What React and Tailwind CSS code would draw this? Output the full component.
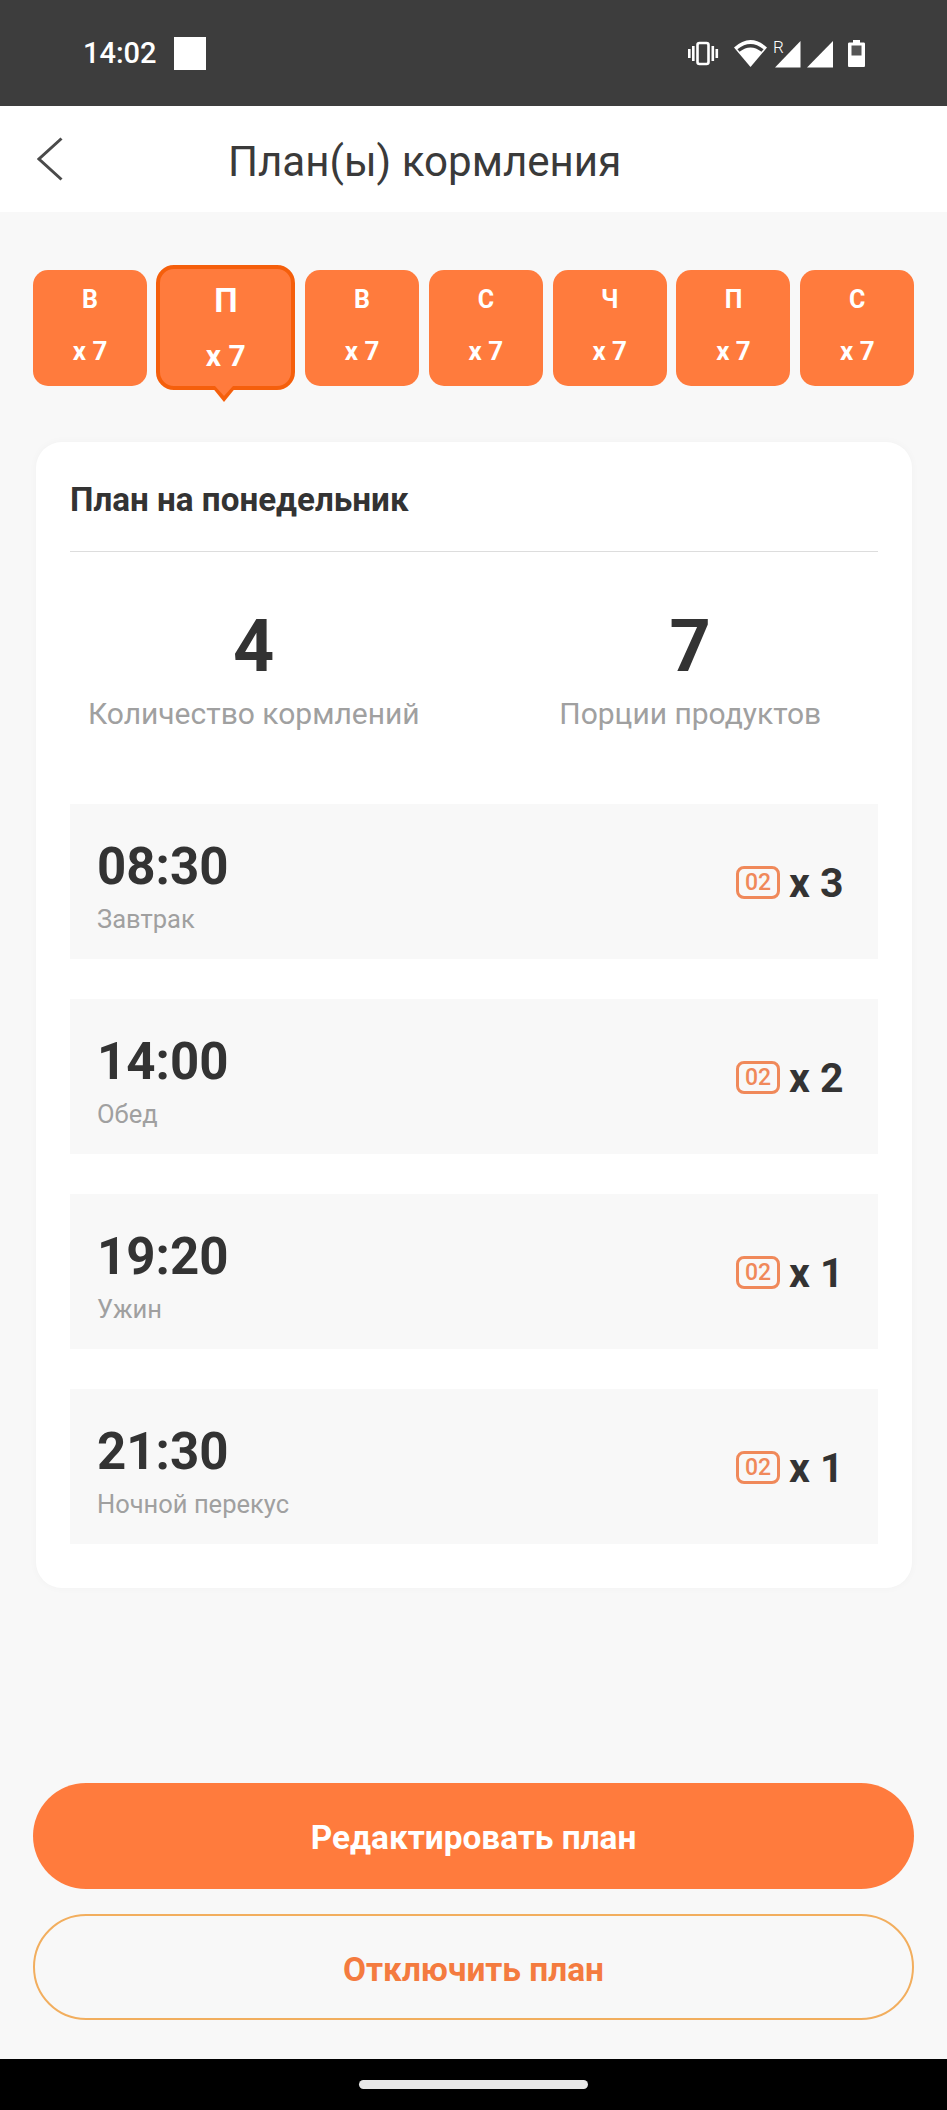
import React from 'react';

const days = [
    { label: 'В', count: 'x 7' },
    { label: 'П', count: 'x 7', active: true },
    { label: 'В', count: 'x 7' },
    { label: 'С', count: 'x 7' },
    { label: 'Ч', count: 'x 7' },
    { label: 'П', count: 'x 7' },
    { label: 'С', count: 'x 7' },
];

const meals = [
    { time: '08:30', name: 'Завтрак', portions: 'x 3' },
    { time: '14:00', name: 'Обед', portions: 'x 2' },
    { time: '19:20', name: 'Ужин', portions: 'x 1' },
    { time: '21:30', name: 'Ночной перекус', portions: 'x 1' },
];

const StatusIcons = () => (
    <svg width="178" height="30" viewBox="0 0 178 30" className="block" fill="white">
        {/* vibrate */}
        <rect x="10.500" y="5" width="11" height="21" rx="2" fill="none" stroke="white" strokeWidth="2.600" />
        <rect x="1" y="11" width="2.600" height="9" />
        <rect x="5" y="8" width="2.600" height="15" />
        <rect x="24.500" y="8" width="2.600" height="15" />
        <rect x="28.500" y="11" width="2.600" height="9" />
        {/* wifi */}
        <path d="M47 9.500Q63.500 -5.500 80 9.500L63.500 29Z" />
        <path d="M51.500 12.500Q63.500 3 75.500 12.500" fill="none" stroke="#3d3d3d" strokeWidth="3.400" />
        {/* roaming */}
        <text x="86" y="15" fontSize="17" fontWeight="300" fill="white" fontFamily="Roboto, sans-serif">R</text>
        {/* signal */}
        <path d="M113.500 3V29.500H88Z" />
        <path d="M146 3V29.500H120Z" />
        {/* battery */}
        <path d="M166 2H173V4.500H176.500C177.500 4.500 178 5 178 6V27.500C178 28.500 177.500 29 176.500 29H162.500C161.500 29 161 28.500 161 27.500V6C161 5 161.500 4.500 162.500 4.500H166Z" />
        <rect x="164.500" y="7.500" width="10" height="10" fill="#555555" />
    </svg>
);

const DayTab = ({ label, count, active }) => {
    if (active) {
        return (
            <div className="relative flex flex-col items-center w-[139px] h-[125px] -ml-[0.5px] rounded-[18px] border-[4px] border-[#f55f0c] bg-[#ff7b3d] text-white font-bold">
                <span className="mt-[14px] text-[33px] leading-[36px]">{label}</span>
                <span className="mt-[20px] text-[30px] leading-[34px]">{count}</span>
                <svg width="30" height="18" viewBox="0 0 30 18" className="absolute left-[49px] top-[117px]">
                    <path d="M2 0H28L15 16Z" fill="#f55f0c" />
                    <path d="M6 0H24L15 10Z" fill="#ff7b3d" />
                </svg>
            </div>
        );
    }
    return (
        <div className="flex flex-col items-center w-[114px] h-[116px] rounded-[15px] bg-[#ff7b3d] text-white font-bold">
            <span className="mt-[15px] text-[25px] leading-[30px]">{label}</span>
            <span className="mt-[21px] text-[26px] leading-[30px]">{count}</span>
        </div>
    );
};

const MealRow = ({ time, name, portions }) => (
    <div className="flex items-center justify-between h-[155px] pl-[27px] pr-[34px] bg-[#f8f8f8]">
        <div className="flex flex-col mt-[8px]">
            <span className="text-[51px] leading-[58px] font-bold text-[#333333]">{time}</span>
            <span className="mt-[8px] text-[25.500px] leading-[30px] text-[#a0a0a0]">{name}</span>
        </div>
        <div className="flex items-center gap-[9px] w-[108px] mt-[2px]">
            <span className="flex items-center justify-center w-[44px] h-[33px] -mt-[1px] rounded-[8px] border-[3px] border-[#f0895a] text-[#f0895a] text-[23px] font-medium leading-none">
                02
            </span>
            <span className="text-[41px] leading-[48px] font-bold text-[#333333] whitespace-nowrap">{portions}</span>
        </div>
    </div>
);

const App = () => {
    return (
        <div className="flex flex-col w-[947px] h-[2110px] bg-[#f8f8f8] font-['Roboto',sans-serif]">
            {/* Status bar */}
            <div className="flex items-center justify-between h-[106px] pl-[83px] pr-[82px] bg-[#3d3d3d] shrink-0">
                <div className="flex items-center gap-[17px]">
                    <span className="text-[29px] leading-[34px] font-medium text-white">14:02</span>
                    <div className="w-[32px] h-[33px] bg-white" />
                </div>
                <StatusIcons />
            </div>

            {/* Header */}
            <div className="flex items-center h-[106px] pl-[37px] bg-white shrink-0">
                <svg width="26" height="44" viewBox="0 0 26 44" fill="none" stroke="#4a4a4a" strokeWidth="3">
                    <path d="M24.500 1.500L2 22L24.500 42.500" />
                </svg>
                <h1 className="ml-[165px] mt-[6px] text-[42.100px] leading-[48px] font-normal text-[#3a3a3a]">План(ы) кормления</h1>
            </div>

            {/* Day selector */}
            <div className="relative flex items-center gap-[9.800px] h-[125px] mt-[53px] ml-[33px] shrink-0">
                {days.map((day, index) => (
                    <DayTab key={index} {...day} />
                ))}
            </div>

            {/* Plan card */}
            <div className="flex flex-col w-[876px] h-[1146px] mt-[52px] ml-[36px] px-[34px] rounded-[26px] bg-white shadow-[0_0_8px_rgba(0,0,0,0.03)] shrink-0">
                <div className="flex items-center h-[110px] pt-[6px] border-b border-[#dddddd] text-[33.200px] font-bold text-[#333333]">
                    План на понедельник
                </div>
                <div className="flex h-[252px]">
                    <div className="flex flex-col items-center w-[372px] pt-[53px]">
                        <span className="text-[72px] leading-[84px] font-bold text-[#333333]">4</span>
                        <span className="mt-[8px] text-[30px] leading-[34px] text-[#a0a0a0]">Количество кормлений</span>
                    </div>
                    <div className="flex flex-col items-center w-[380px] ml-[65px] pt-[53px]">
                        <span className="text-[72px] leading-[84px] font-bold text-[#333333]">7</span>
                        <span className="mt-[8px] text-[30px] leading-[34px] text-[#a0a0a0]">Порции продуктов</span>
                    </div>
                </div>
                <div className="flex flex-col gap-[40px]">
                    {meals.map((meal) => (
                        <MealRow key={meal.time} {...meal} />
                    ))}
                </div>
            </div>

            {/* Actions */}
            <div className="flex flex-col gap-[25px] mt-[195px] mx-[33px] shrink-0">
                <button className="h-[106px] pt-[5px] rounded-full bg-[#ff7b3d] text-white text-[33.400px] font-bold">
                    Редактировать план
                </button>
                <button className="h-[106px] pt-[6px] rounded-full border-2 border-[#f2ae5e] text-[#f47b3f] text-[33.400px] font-bold">
                    Отключить план
                </button>
            </div>

            {/* Navigation bar */}
            <div className="flex items-center justify-center mt-[39px] h-[51px] bg-black shrink-0">
                <div className="w-[229px] h-[9px] rounded-full bg-[#e8e8e8]" />
            </div>
        </div>
    );
};

export default App;
